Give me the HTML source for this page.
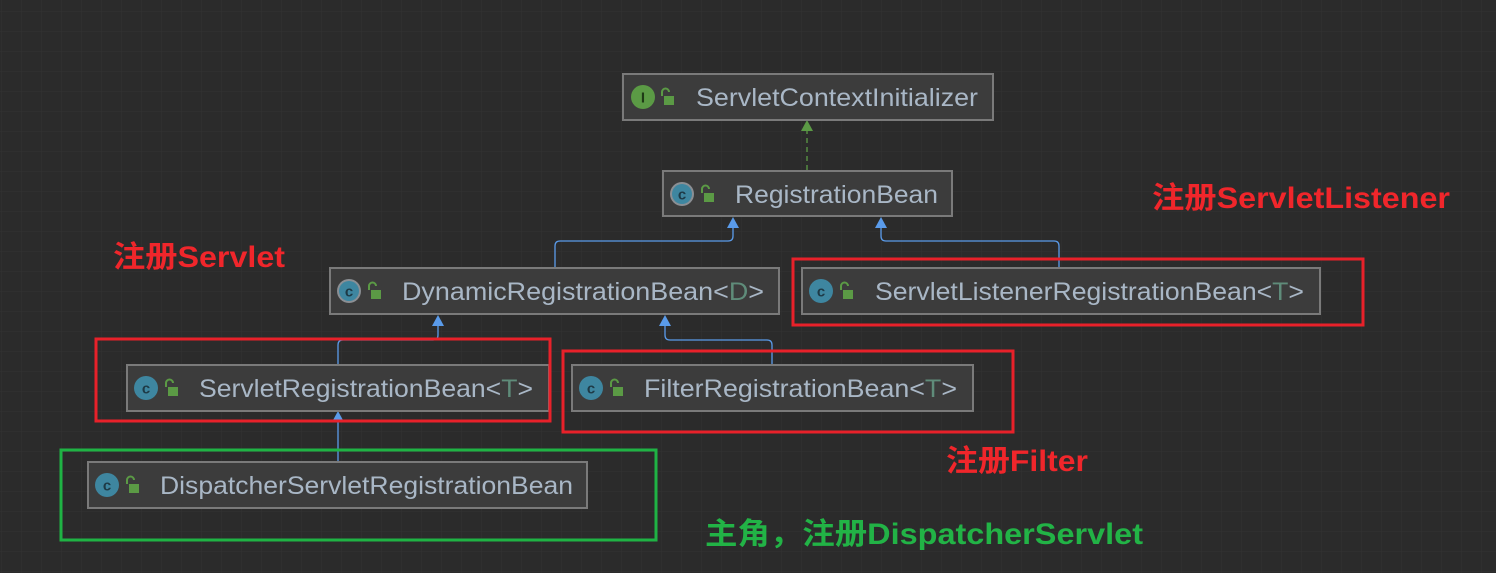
<!DOCTYPE html>
<html><head><meta charset="utf-8"><style>
html,body{margin:0;padding:0;background:#2b2b2b;}
svg{display:block}
text{font-family:"Liberation Sans","Noto Sans CJK SC",sans-serif;}
</style></head><body>
<svg width="1496" height="573" xmlns="http://www.w3.org/2000/svg">
<defs>
<pattern id="g" width="20" height="20" patternUnits="userSpaceOnUse" x="2" y="12">
<path d="M20 0V20M0 20H20" stroke="#333333" stroke-width="1" fill="none"/>
</pattern>
<g id="lock"><path d="M-5 -3v-4a3.5 3.5 0 0 1 7 0" stroke="#5b9a45" stroke-width="2" fill="none"/><rect x="-3" y="-3" width="10" height="9" fill="#5b9a45"/></g>
<g id="ci"><circle r="12" fill="#3e86a0"/><text x="0" y="5.5" font-size="15" fill="#1e3a46" text-anchor="middle" font-weight="bold">c</text></g>
<g id="ca"><circle r="12" fill="#8b8f94"/><circle r="10" fill="#3e86a0"/><text x="0" y="5.5" font-size="15" fill="#1e3a46" text-anchor="middle" font-weight="bold">c</text></g>
</defs>
<rect width="1496" height="573" fill="#2b2b2b"/>
<rect width="1496" height="573" fill="url(#g)"/>

<g fill="none" stroke-width="1.3">
<path d="M807 170V128" stroke="#5b9a45" stroke-dasharray="5,4"/>
<path d="M555 268V246q0-5 5-5H728q5 0 5-5V224" stroke="#5a9bea"/>
<path d="M1059 268V246q0-5-5-5H886q-5 0-5-5V224" stroke="#5a9bea"/>
<path d="M338 365V345q0-5 5-5H433q5 0 5-5V322" stroke="#5a9bea"/>
<path d="M772 365V345q0-5-5-5H670q-5 0-5-5V322" stroke="#5a9bea"/>
<path d="M338 462V419" stroke="#5a9bea"/>
</g>
<g>
<path d="M801 131l6-11l6 11z" fill="#5b9a45"/>
<path d="M727 228l6-11l6 11z" fill="#5a9bea"/>
<path d="M875 228l6-11l6 11z" fill="#5a9bea"/>
<path d="M432 326l6-11l6 11z" fill="#5a9bea"/>
<path d="M659 326l6-11l6 11z" fill="#5a9bea"/>
<path d="M332 422l6-11l6 11z" fill="#5a9bea"/>
</g>

<g fill="#3c3c3c" stroke="#7a7a7a" stroke-width="2">
<rect x="623" y="74" width="370" height="46"/>
<rect x="663" y="171" width="289" height="45"/>
<rect x="330" y="268" width="449" height="46"/>
<rect x="802" y="268" width="518" height="46"/>
<rect x="127" y="365" width="422" height="46"/>
<rect x="572" y="365" width="401" height="46"/>
<rect x="88" y="462" width="499" height="46"/>
</g>
<g font-size="25" fill="#a9b7c6">
<g transform="translate(643,97)"><circle r="12" fill="#5b9a45"/><text x="0" y="5.5" font-size="15" fill="#1f3a16" text-anchor="middle" font-weight="bold">I</text></g>
<use href="#lock" transform="translate(667,99)"/>
<text x="696" y="106" textLength="282" lengthAdjust="spacingAndGlyphs">ServletContextInitializer</text>

<use href="#ca" transform="translate(682,194)"/>
<use href="#lock" transform="translate(707,196)"/>
<text x="735" y="203" textLength="203" lengthAdjust="spacingAndGlyphs">RegistrationBean</text>

<use href="#ca" transform="translate(349,291)"/>
<use href="#lock" transform="translate(374,293)"/>
<text x="402" y="300" textLength="362" lengthAdjust="spacingAndGlyphs">DynamicRegistrationBean&lt;<tspan fill="#5f8c7a">D</tspan>&gt;</text>

<use href="#ci" transform="translate(821,291)"/>
<use href="#lock" transform="translate(846,293)"/>
<text x="875" y="300" textLength="429" lengthAdjust="spacingAndGlyphs">ServletListenerRegistrationBean&lt;<tspan fill="#5f8c7a">T</tspan>&gt;</text>

<use href="#ci" transform="translate(146,388)"/>
<use href="#lock" transform="translate(171,390)"/>
<text x="199" y="397" textLength="334" lengthAdjust="spacingAndGlyphs">ServletRegistrationBean&lt;<tspan fill="#5f8c7a">T</tspan>&gt;</text>

<use href="#ci" transform="translate(591,388)"/>
<use href="#lock" transform="translate(616,390)"/>
<text x="644" y="397" textLength="313" lengthAdjust="spacingAndGlyphs">FilterRegistrationBean&lt;<tspan fill="#5f8c7a">T</tspan>&gt;</text>

<use href="#ci" transform="translate(107,485)"/>
<use href="#lock" transform="translate(132,487)"/>
<text x="160" y="494" textLength="413" lengthAdjust="spacingAndGlyphs">DispatcherServletRegistrationBean</text>
</g>

<g fill="none" stroke-width="3">
<rect x="96" y="339" width="454" height="82" stroke="#e8212a"/>
<rect x="563" y="351" width="450" height="81" stroke="#e8212a"/>
<rect x="793" y="259" width="570" height="66" stroke="#e8212a"/>
<rect x="61" y="450" width="595" height="90" stroke="#1fb344"/>
</g>
<g font-size="30" font-weight="bold">
<text x="113" y="267" fill="#f0262b" textLength="172" lengthAdjust="spacingAndGlyphs">注册Servlet</text>
<text x="1152" y="208" fill="#f0262b" textLength="298" lengthAdjust="spacingAndGlyphs">注册ServletListener</text>
<text x="946" y="471" fill="#f0262b" textLength="142" lengthAdjust="spacingAndGlyphs">注册Filter</text>
<text x="705" y="544" fill="#22b346" textLength="438" lengthAdjust="spacingAndGlyphs">主角，注册DispatcherServlet</text>
</g>
</svg>
</body></html>
